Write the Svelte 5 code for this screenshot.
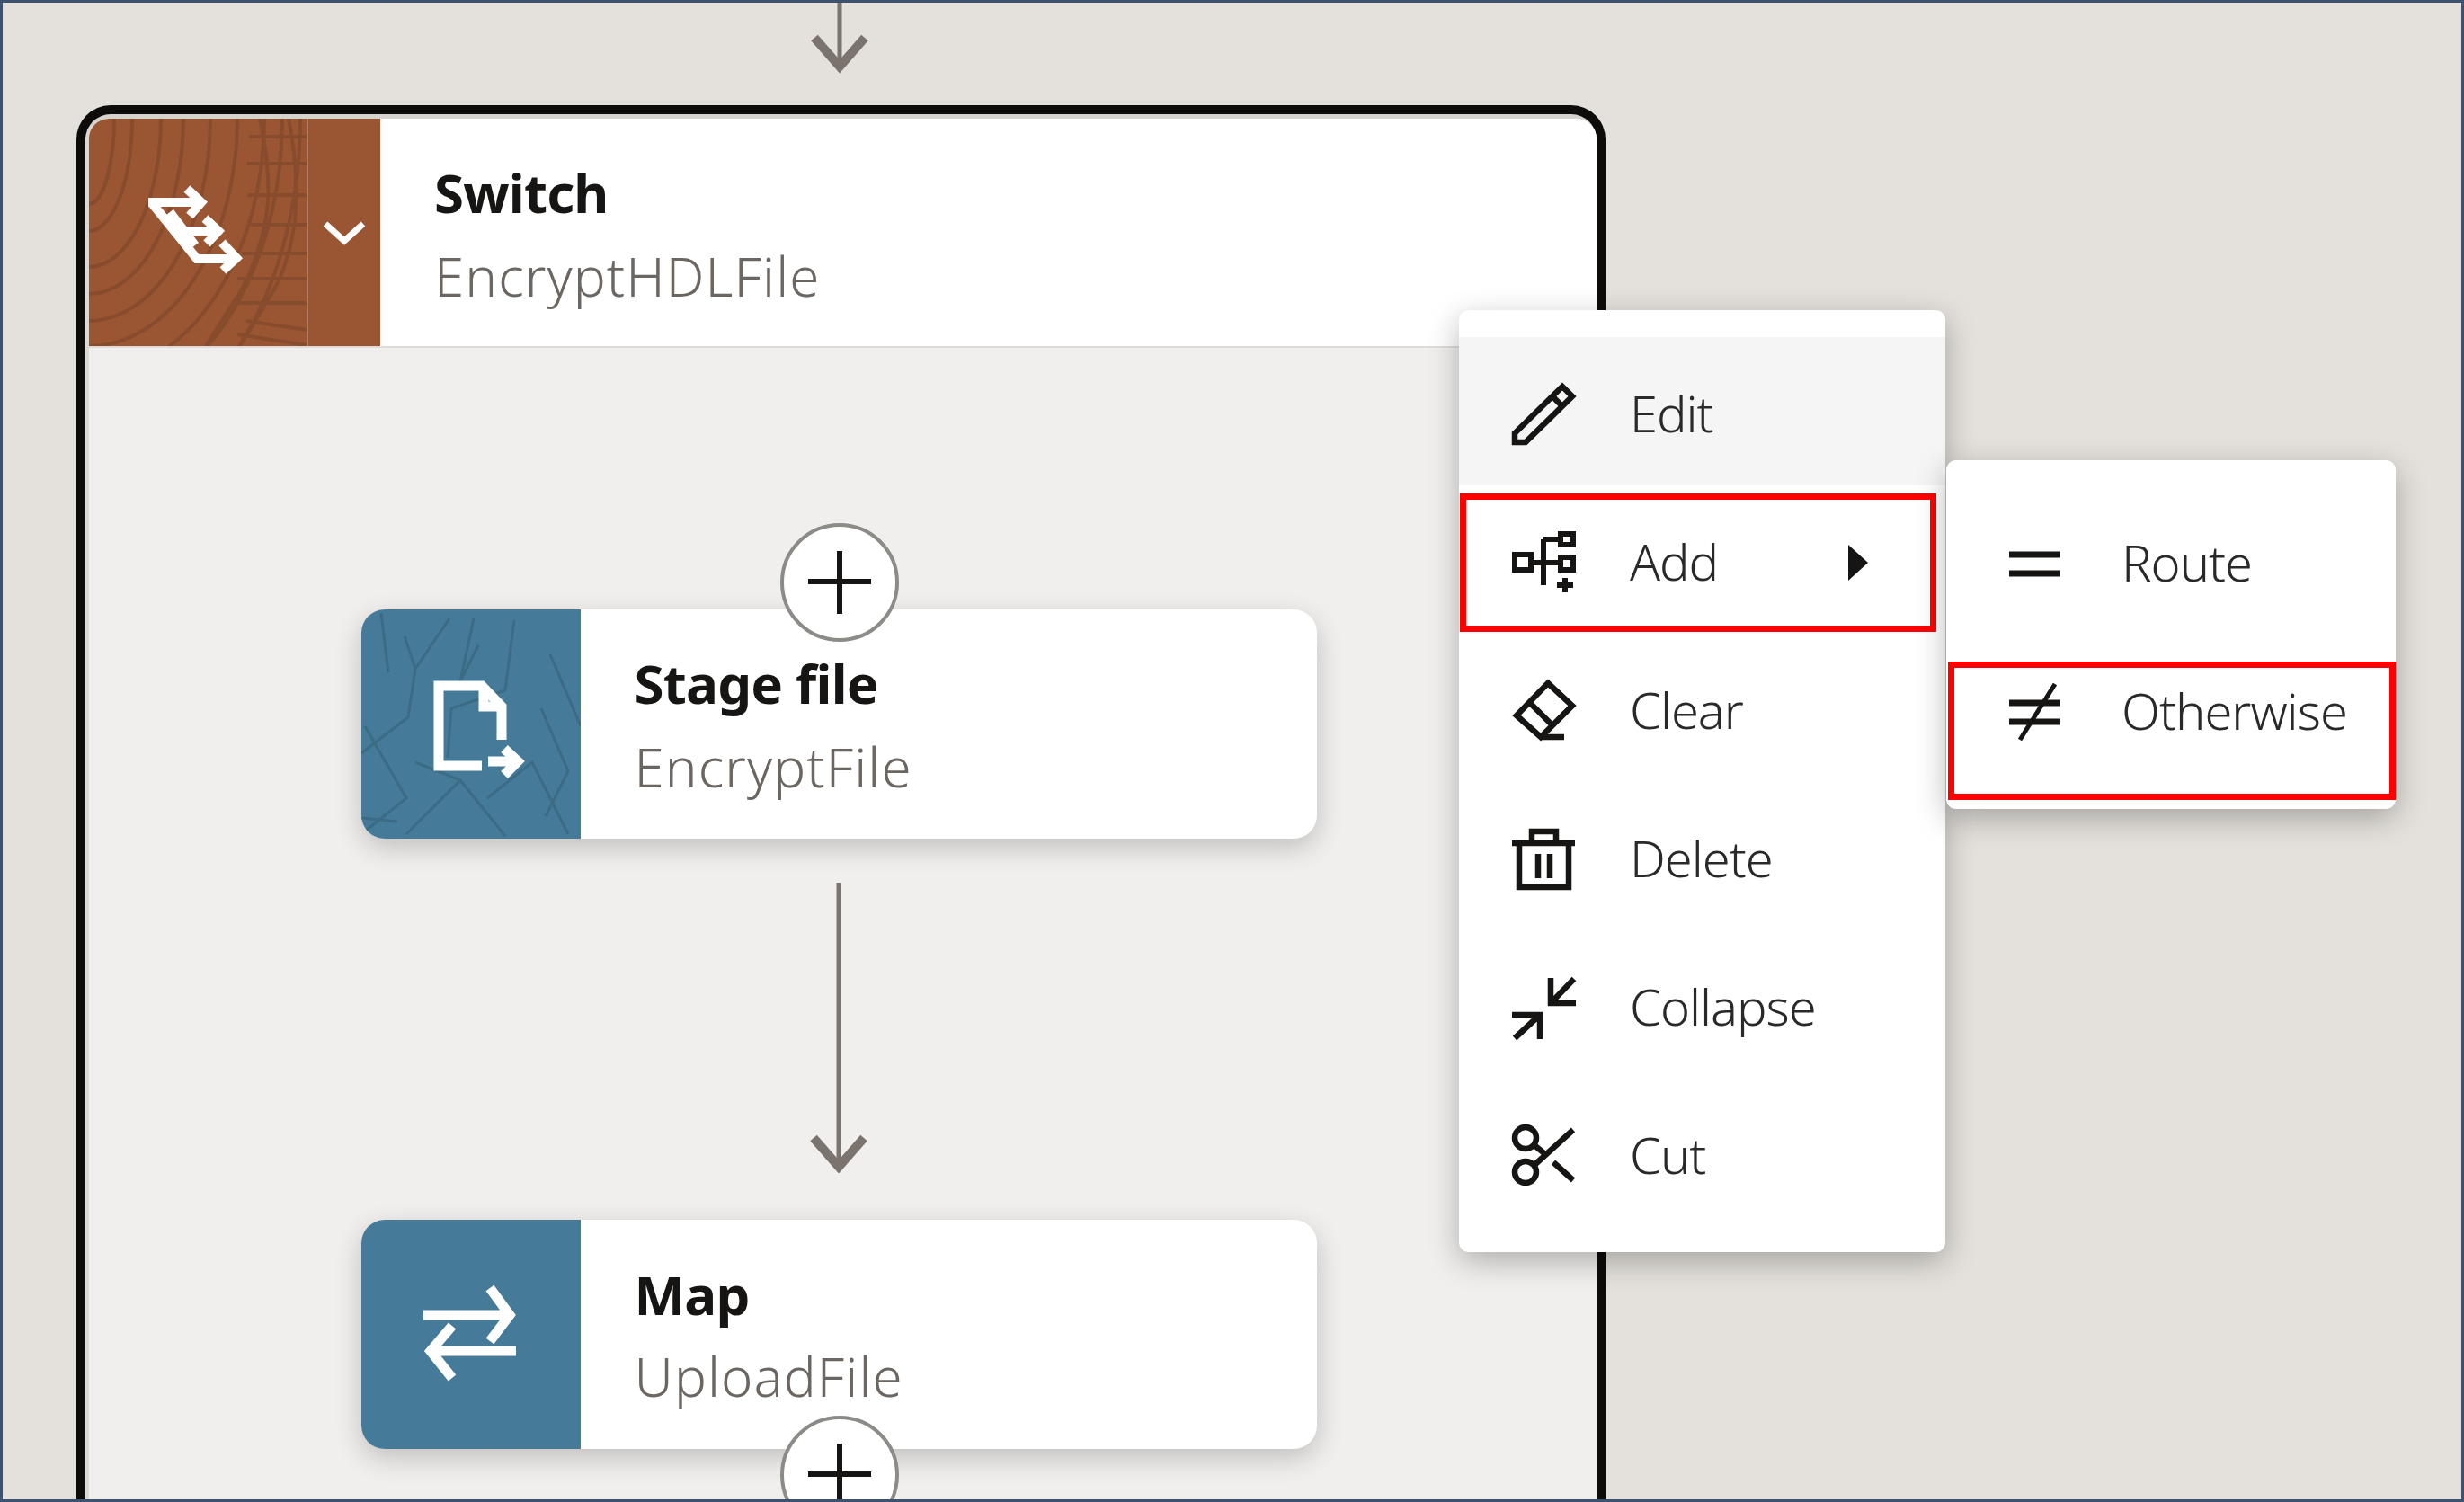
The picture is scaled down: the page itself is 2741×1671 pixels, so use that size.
<script>
  const woodArcs = [
    [28, 95], [48, 125], [80, 165], [105, 195], [135, 225], [165, 253], [195, 285], [215, 320], [235, 360]
  ];
  const cracks = [
    "M22 4 L30 70", "M48 30 L60 66 L98 10", "M60 66 L52 120 L0 160", "M130 40 L110 80 L125 10",
    "M170 12 L160 90 L100 110 L96 165", "M4 130 L50 210 L0 250", "M60 170 L110 190 L50 250",
    "M110 190 L160 252", "M210 50 L244 130", "M200 110 L230 180 L205 230", "M140 210 L190 170 L230 250", "M0 232 L40 236"
  ];
</script>

<div class="page">
  <svg class="arrow top-arrow" width="70" height="80" viewBox="0 0 70 80">
    <path d="M35 0 V72" />
    <path class="head" d="M7 39 L35 71 L63 39" />
  </svg>

  <section class="switch">
    <div class="switch-inner">
      <header class="switch-head">
        <div class="tile brown">
          <svg width="242" height="253" viewBox="0 0 242 253">
            <g class="wood">
              {#each woodArcs as [rx, ry]}
                <path d="M0 {ry} A{rx} {ry} 0 0 0 {rx} 0" />
              {/each}
              <path d="M190 0 C205 70 205 120 170 190 L130 253" />
              <path d="M222 0 C238 80 232 150 200 200 L168 253" />
              <path d="M178 20 H242 M176 50 H242 M176 85 H242 M176 118 H242 M170 150 H242 M165 178 H242 M160 205 H242 M175 225 L242 235 M165 240 L242 252" />
            </g>
            <g class="switch-icon">
              <path d="M66 93 H124 M70 94 L120 156 H164 M90 104 L118 141 M100 125 H143" />
              <path d="M109 78 L125 93 L112 108 M129 111 L144 125 L131 139 M148 138 L164 155 L149 169" />
            </g>
          </svg>
        </div>
        <div class="tile brown chevron">
          <svg width="80" height="253" viewBox="0 0 80 253">
            <path d="M19 117 L40 136 L61 117" />
          </svg>
        </div>
        <div class="labels">
          <div class="title">Switch</div>
          <div class="sub">EncryptHDLFile</div>
        </div>
      </header>

      <div class="switch-body">
        <article class="card">
          <div class="tile teal">
            <svg width="244" height="255" viewBox="0 0 244 255">
              <g class="cracks">
                {#each cracks as d}
                  <path {d} />
                {/each}
              </g>
              <g class="white-icon">
                <path d="M134 174 H86 V85 H134 L156 108 V145" />
                <path d="M136 85 V108 H156" />
                <path d="M141 169 H172" />
                <path d="M159 155 L174 169 L159 184" />
              </g>
            </svg>
          </div>
          <div class="labels">
            <div class="title">Stage file</div>
            <div class="sub">EncryptFile</div>
          </div>
          <button class="plus plus-top" aria-label="Add">
            <svg width="70" height="70" viewBox="0 0 70 70"><path d="M0 34 H70 M35 0 V70" /></svg>
          </button>
        </article>

        <svg class="arrow mid-arrow" width="70" height="323" viewBox="0 0 70 323">
          <path d="M35 0 V316" />
          <path class="head" d="M7 284 L35 316 L63 284" />
        </svg>

        <article class="card map-card">
          <div class="tile teal">
            <svg width="244" height="255" viewBox="0 0 244 255">
              <g class="white-icon">
                <path d="M69 106 H164 M143 76 L165 106 L143 135" />
                <path d="M172 146 H78 M101 118 L77 146 L101 176" />
              </g>
            </svg>
          </div>
          <div class="labels">
            <div class="title">Map</div>
            <div class="sub">UploadFile</div>
          </div>
          <button class="plus plus-bottom" aria-label="Add">
            <svg width="70" height="70" viewBox="0 0 70 70"><path d="M0 34 H70 M35 0 V70" /></svg>
          </button>
        </article>
      </div>
    </div>
  </section>

  <nav class="menu main-menu">
    <div class="row active">
      <svg class="ico" viewBox="0 0 70 70"><path d="M3 66 V56 L56 4 L67 15 L15 66 Z M45 15 L56 26" /></svg>
      <span>Edit</span>
    </div>
    <div class="row marked add-row">
      <svg class="ico" viewBox="0 0 70 70">
        <path class="thin" d="M3 26 H21 V43 H3 Z M54 3 H68 V15 H54 Z M54 29 H68 V43 H54 Z M21 35 H54 M35 9 H54 M35 9 V60 M59 52 V68 M50 60 H68" />
      </svg>
      <span>Add</span>
      <i class="caret"></i>
    </div>
    <div class="row">
      <svg class="ico" viewBox="0 0 70 70"><path d="M40 4 L67 29 L32 64 L5 40 Z M19 25 L44 50 M32 64 H58" /></svg>
      <span>Clear</span>
    </div>
    <div class="row">
      <svg class="ico" viewBox="0 0 70 70"><path d="M0 17 H70 M8 17 V66 H63 V17 M22 17 V4 H49 V17 M29 29 V56 M42 29 V56" /></svg>
      <span>Delete</span>
    </div>
    <div class="row">
      <svg class="ico" viewBox="0 0 70 70"><path d="M43 2 V30 H71 M43 30 L69 3 M0 43 H31 V70 M31 43 L3 69" /></svg>
      <span>Collapse</span>
    </div>
    <div class="row">
      <svg class="ico" viewBox="0 0 70 70">
        <circle cx="15" cy="15" r="12" /><circle cx="15" cy="53" r="12" />
        <path d="M25 45 L68 6 M26 24 L37 33 M46 42 L68 62" />
      </svg>
      <span>Cut</span>
    </div>
  </nav>

  <nav class="menu sub-menu">
    <div class="row">
      <svg class="ico" viewBox="0 0 70 70"><path class="bars" d="M6 24 H63 M6 45 H63" /></svg>
      <span>Route</span>
    </div>
    <div class="row marked other-row">
      <svg class="ico" viewBox="0 0 70 70">
        <path class="bars" d="M6 24 H63 M6 45 H63" />
        <path class="slash" d="M57 3 L18 65" />
      </svg>
      <span>Otherwise</span>
    </div>
  </nav>
</div>

<style>
  :global(body) {
    margin: 0;
    background: #e4e1dc;
  }

  .page {
    position: relative;
    box-sizing: border-box;
    height: 1671px;
    width: 2741px;
    overflow: hidden;
    padding: 0 952px 0 82px;
    background: #e4e1dc;
    border: 3px solid #3e5270;
    display: flex;
    flex-direction: column;
    align-items: center;
    font-family: "Noto Sans", "Open Sans", sans-serif;
  }

  .arrow {
    flex: none;
    fill: none;
    stroke: #7a736e;
    stroke-width: 5;
  }

  .arrow .head {
    stroke-width: 10;
  }

  .top-arrow {
    margin-bottom: 34px;
    margin-right: 3px;
  }

  .switch {
    width: 100%;
    flex: 1;
    box-sizing: border-box;
    border: 10px solid #0d0c0b;
    border-bottom: none;
    border-radius: 38px 38px 0 0;
    background: #d6d3ce;
  }

  .switch-inner {
    height: 100%;
    box-sizing: border-box;
    margin: 5px 0 0;
    border-left: 4px solid #dcd9d5;
    background: #f0efed;
    border-radius: 26px 26px 0 0;
  }

  .switch-head {
    display: flex;
    height: 253px;
    background: #fff;
    border-bottom: 2px solid #dedcd9;
    border-radius: 22px 22px 0 0;
    overflow: hidden;
  }

  .tile {
    flex: none;
    line-height: 0;
    overflow: hidden;
  }

  .brown {
    background: #9a5632;
  }

  .chevron {
    border-left: 2px solid #b17a5c;
  }

  .chevron path {
    fill: none;
    stroke: #fff;
    stroke-width: 7;
  }

  .wood {
    fill: none;
    stroke: #874c2d;
    stroke-width: 4;
  }

  .switch-icon {
    fill: none;
    stroke: #fff;
    stroke-width: 10;
  }

  .labels {
    padding-left: 60px;
    padding-top: 4px;
    align-self: center;
  }

  .card .labels {
    padding-top: 2px;
  }

  .map-card .labels {
    padding-top: 0;
  }

  .title {
    font-size: 60px;
    line-height: 93px;
    font-weight: 700;
    letter-spacing: -0.8px;
    color: #161513;
  }

  .sub {
    font-size: 60px;
    line-height: 93px;
    font-weight: 300;
    letter-spacing: 1.1px;
    color: #6b6661;
  }

  .map-card .sub {
    line-height: 89px;
  }

  .switch-body {
    display: flex;
    flex-direction: column;
    align-items: center;
    padding-top: 291px;
  }

  .card {
    position: relative;
    display: flex;
    flex: none;
    width: 1063px;
    height: 255px;
    margin-right: 9px;
    background: #fff;
    border-radius: 26px;
    box-shadow: 0 10px 30px rgba(0, 0, 0, 0.2);
  }

  .teal {
    background: #457b98;
    border-radius: 26px 0 0 26px;
  }

  .cracks {
    fill: none;
    stroke: #3b6b85;
    stroke-width: 3;
  }

  .white-icon {
    fill: none;
    stroke: #fff;
    stroke-width: 11;
  }

  .mid-arrow {
    margin: 49px 9px 52px 0;
  }

  .plus {
    position: absolute;
    left: 466px;
    width: 132px;
    height: 132px;
    padding: 0;
    box-sizing: border-box;
    display: flex;
    align-items: center;
    justify-content: center;
    background: #fff;
    border: 4px solid #8d8b88;
    border-radius: 50%;
  }

  .plus-top {
    top: -96px;
  }

  .plus-bottom {
    top: 218px;
  }

  .plus path {
    stroke: #161513;
    stroke-width: 6;
  }

  .menu {
    position: absolute;
    box-sizing: border-box;
    padding: 30px 0 28px;
    background: #fff;
    border-radius: 11px;
    box-shadow: 0 10px 34px rgba(0, 0, 0, 0.28);
    font-size: 56px;
    font-weight: 350;
    color: #2a2927;
  }

  .main-menu {
    left: 1620px;
    top: 342px;
    width: 541px;
  }

  .sub-menu {
    left: 2162px;
    top: 509px;
    width: 500px;
  }

  .row {
    position: relative;
    display: flex;
    align-items: center;
    gap: 61px;
    box-sizing: border-box;
    height: 165px;
    padding: 7px 0 0 59px;
  }

  .row span {
    margin-bottom: 4px;
    letter-spacing: -1px;
  }

  .sub-menu .row {
    padding-left: 64px;
  }

  .sub-menu .row span {
    margin-bottom: 7px;
  }

  .active {
    background: #f5f5f5;
  }

  .marked::after {
    content: "";
    position: absolute;
    box-sizing: border-box;
    border: 7px solid #f00;
  }

  .add-row::after {
    left: 1px;
    right: 10px;
    top: 9px;
    bottom: 2px;
  }

  .other-row::after {
    left: 2px;
    right: 0;
    top: 29px;
    bottom: -18px;
  }

  .ico {
    flex: none;
    width: 70px;
    height: 70px;
    overflow: visible;
    fill: none;
    stroke: #161513;
    stroke-width: 6.5;
  }

  .ico .thin {
    stroke-width: 6;
  }

  .ico .bars {
    stroke-width: 7;
  }

  .ico .slash {
    stroke-width: 5;
  }

  .caret {
    position: absolute;
    right: 86px;
    top: 66px;
    border-left: 22px solid #161513;
    border-top: 20px solid transparent;
    border-bottom: 20px solid transparent;
  }
</style>
